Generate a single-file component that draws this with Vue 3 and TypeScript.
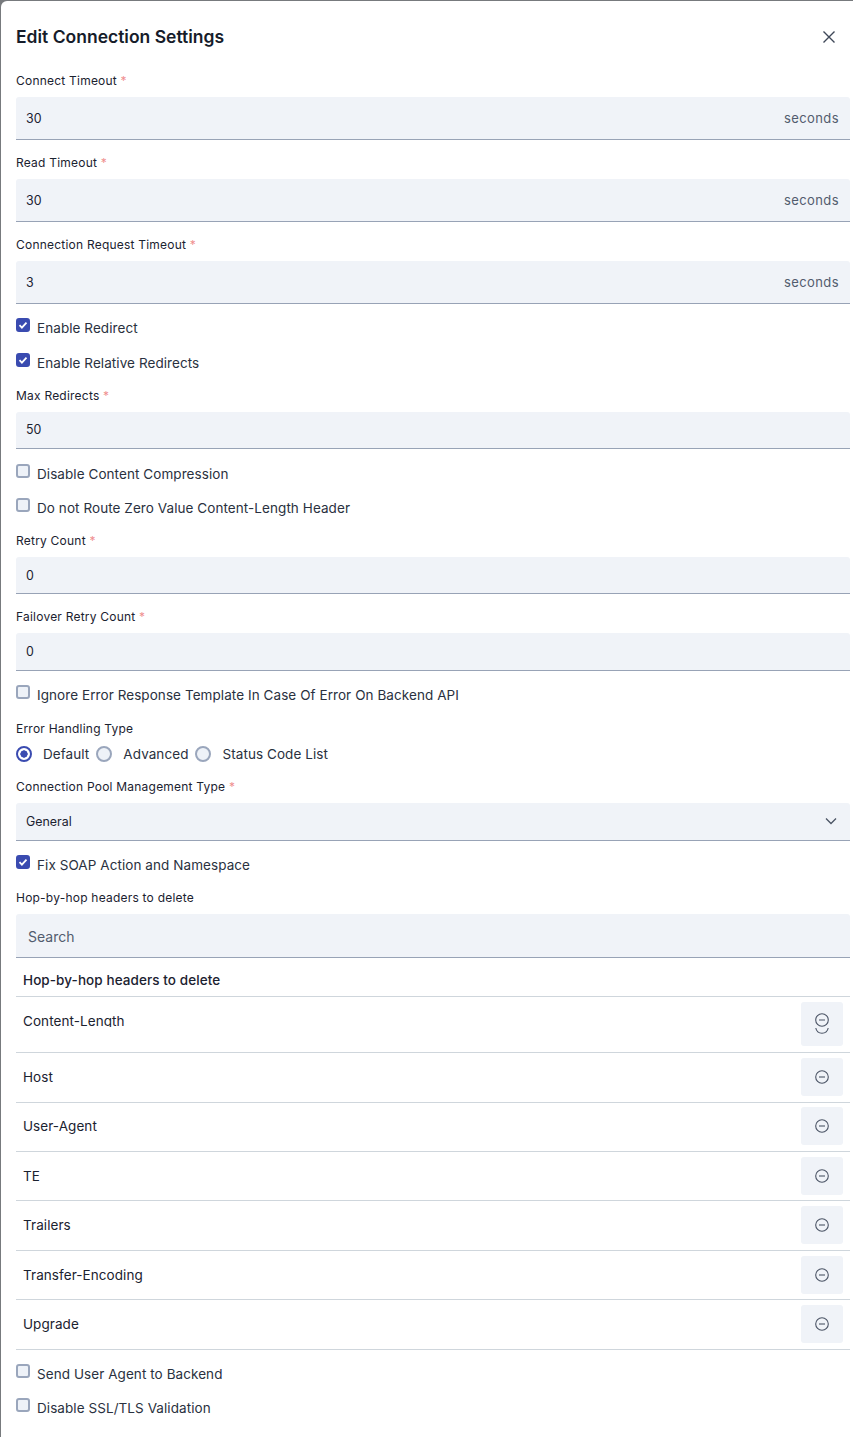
<script setup lang="ts">
import { reactive, ref } from 'vue';

const timeouts = reactive([
  { label: 'Connect Timeout', value: '30' },
  { label: 'Read Timeout', value: '30' },
  { label: 'Connection Request Timeout', value: '3' },
]);

const errorType = ref('Default');
const errorTypes = ['Default', 'Advanced', 'Status Code List'];

const headers = ref(['Content-Length', 'Host', 'User-Agent', 'TE', 'Trailers', 'Transfer-Encoding', 'Upgrade']);
</script>

<template>
  <div class="modal">
    <header class="modal-head">
      <h2>Edit Connection Settings</h2>
      <button class="close" aria-label="Close">
        <svg width="14" height="14" viewBox="0 0 14 14"><path d="M1.5 1.5l11 11M12.5 1.5l-11 11" /></svg>
      </button>
    </header>

    <form class="form" @submit.prevent>
      <div v-for="t in timeouts" :key="t.label" class="field">
        <label class="label">{{ t.label }} <em>*</em></label>
        <div class="input tall">
          <input v-model="t.value" />
          <span class="unit">seconds</span>
        </div>
      </div>

      <label class="check on first"><span class="box"><svg width="10" height="10" viewBox="0 0 10 10"><path d="M1.5 5.2l2.4 2.4 4.6-5" /></svg></span>Enable Redirect</label>
      <label class="check on"><span class="box"><svg width="10" height="10" viewBox="0 0 10 10"><path d="M1.5 5.2l2.4 2.4 4.6-5" /></svg></span>Enable Relative Redirects</label>

      <div class="field">
        <label class="label">Max Redirects <em>*</em></label>
        <div class="input"><input value="50" /></div>
      </div>

      <label class="check nudge-down"><span class="box"></span>Disable Content Compression</label>
      <label class="check nudge-up"><span class="box"></span>Do not Route Zero Value Content-Length Header</label>

      <div class="field">
        <label class="label">Retry Count <em>*</em></label>
        <div class="input low"><input value="0" /></div>
      </div>
      <div class="field">
        <label class="label">Failover Retry Count <em>*</em></label>
        <div class="input"><input value="0" /></div>
      </div>

      <label class="check"><span class="box"></span>Ignore Error Response Template In Case Of Error On Backend API</label>

      <div class="field error-type">
        <label class="label">Error Handling Type</label>
        <div class="radios">
          <label v-for="r in errorTypes" :key="r" class="radio" :class="{ on: errorType === r }" @click="errorType = r">
            <span class="dot"></span>{{ r }}
          </label>
        </div>
      </div>

      <div class="field">
        <label class="label">Connection Pool Management Type <em>*</em></label>
        <div class="input select">
          <span>General</span>
          <svg width="12" height="8" viewBox="0 0 12 8"><path d="M1 1.5l5 5 5-5" /></svg>
        </div>
      </div>

      <label class="check on"><span class="box"><svg width="10" height="10" viewBox="0 0 10 10"><path d="M1.5 5.2l2.4 2.4 4.6-5" /></svg></span>Fix SOAP Action and Namespace</label>

      <div class="field">
        <label class="label">Hop-by-hop headers to delete</label>
        <div class="input search"><input placeholder="Search" /></div>
        <div class="table">
          <div class="table-head">Hop-by-hop headers to delete</div>
          <div v-for="(h, i) in headers" :key="h" class="row" :class="{ cut: i === 0 }">
            <span class="name">{{ h }}</span>
            <button class="remove" :aria-label="'Remove ' + h">
              <svg v-if="i === 0" width="16" height="22" viewBox="0 0 16 22">
                <circle cx="8" cy="7" r="6.3" />
                <path d="M5 7h6M1.8 15a6.3 6.3 0 0 0 12.4 0" />
              </svg>
              <svg v-else width="16" height="16" viewBox="0 0 16 16">
                <circle cx="8" cy="8" r="6.3" />
                <path d="M5 8h6" />
              </svg>
            </button>
          </div>
        </div>
      </div>

      <label class="check"><span class="box"></span>Send User Agent to Backend</label>
      <label class="check"><span class="box"></span>Disable SSL/TLS Validation</label>
    </form>
  </div>
</template>

<style>
html,
body {
  margin: 0;
  height: 100%;
  overflow: hidden;
  background: #777a7d;
}
</style>

<style scoped>
.modal {
  box-sizing: border-box;
  margin: 1px 0 0 1px;
  height: 1436px;
  padding: 0 3px 0 15px;
  background: #fff;
  border-radius: 6px 0 0 0;
  font-family: Inter, "Liberation Sans", sans-serif;
  color: #1b2230;
  overflow: hidden;
}

.modal-head {
  display: flex;
  align-items: center;
  justify-content: space-between;
  height: 71px;
  padding-right: 14px;
}

.modal-head h2 {
  margin: 0;
  font-size: 17.5px;
  font-weight: 600;
  color: #161c2a;
}

.close {
  display: flex;
  padding: 0;
  border: 0;
  background: none;
}

.close path {
  fill: none;
  stroke: #3f4858;
  stroke-width: 1.4;
}

.form {
  display: flex;
  flex-direction: column;
  gap: 14.3px;
}

.label {
  display: block;
  height: 16px;
  margin-bottom: 8.7px;
  font-size: 12px;
  font-weight: 400;
  line-height: 18px;
  letter-spacing: 0.22px;
}

.label em {
  font-style: normal;
  color: #ef8f8f;
}

.input {
  box-sizing: border-box;
  display: flex;
  align-items: center;
  height: 37.5px;
  padding: 0 11px 0 10px;
  background: #f0f3f8;
  border-bottom: 1px solid #98a3b6;
  border-radius: 3px 3px 0 0;
  font-size: 12.4px;
}

.input.tall {
  height: 43px;
  padding-top: 2px;
}

.input.low {
  padding-top: 2px;
}

.input input {
  flex: 1;
  min-width: 0;
  padding: 0;
  border: 0;
  outline: 0;
  background: none;
  font: inherit;
  color: #1b2230;
}

.unit {
  font-size: 13px;
  letter-spacing: 0.4px;
  color: #525c6e;
}

.tall .unit {
  margin-top: -2px;
}

.select {
  justify-content: space-between;
  padding-right: 13px;
}

.select path {
  fill: none;
  stroke: #4b5465;
  stroke-width: 1.3;
}

.search {
  height: 44px;
  padding-top: 2px;
  padding-left: 12px;
  font-size: 14px;
  letter-spacing: 0.2px;
}

.search input::placeholder {
  color: #525c6e;
  opacity: 1;
}

.check {
  display: flex;
  align-items: flex-start;
  height: 20px;
  font-size: 13.5px;
  line-height: 20px;
  letter-spacing: 0.07px;
  color: #2a3140;
}

.check.first {
  margin-top: 0.3px;
}

.check.nudge-down {
  margin-top: 0.5px;
}

.check.nudge-up {
  margin-bottom: -0.5px;
}

.box {
  box-sizing: border-box;
  display: flex;
  align-items: center;
  justify-content: center;
  width: 14px;
  height: 14px;
  margin-right: 7px;
  background: #eef2f8;
  border: 2px solid #9aa6bc;
  border-radius: 3px;
}

.check.on .box {
  background: #3a4bb0;
  border-color: #3a4bb0;
}

.box path {
  fill: none;
  stroke: #fff;
  stroke-width: 1.8;
}

.error-type {
  margin: 1px 0 1.2px;
}

.radios {
  display: flex;
  align-items: center;
  height: 17px;
  padding-top: 1px;
}

.radio {
  display: flex;
  align-items: center;
  margin-right: 7px;
  font-size: 13.5px;
  letter-spacing: 0.07px;
  color: #2a3140;
}

.dot {
  box-sizing: border-box;
  width: 16px;
  height: 16px;
  margin-right: 11px;
  background: #eef2f8;
  border: 2px solid #9aa6bc;
  border-radius: 50%;
}

.radio.on .dot {
  background: radial-gradient(circle, #3a4bb0 0 3.4px, #fff 3.9px);
  border-color: #3a4bb0;
}

.table-head {
  height: 39.3px;
  box-sizing: border-box;
  padding: 0 7px;
  font-size: 13.5px;
  font-weight: 500;
  line-height: 44px;
  letter-spacing: 0.08px;
  border-bottom: 1px solid #cfd6dc;
}

.row {
  box-sizing: border-box;
  display: flex;
  align-items: center;
  justify-content: space-between;
  height: 49.4px;
  padding: 0 7px 0.6px;
  font-size: 13.5px;
  letter-spacing: 0.07px;
  border-bottom: 1px solid #cfd6dc;
}

.row:last-child {
  height: 49.7px;
}

.row.cut {
  height: 56px;
  padding-bottom: 0;
}

.row.cut .name {
  height: 15px;
  margin-bottom: 11px;
  overflow: hidden;
  line-height: 19px;
}

.remove {
  display: flex;
  align-items: center;
  justify-content: center;
  width: 42px;
  height: 38px;
  padding: 0;
  border: 0;
  border-radius: 3px;
  background: #f0f3f8;
}

.row.cut .remove {
  height: 44px;
  margin-bottom: 1px;
}

.remove circle,
.remove path {
  fill: none;
  stroke: #4b5465;
  stroke-width: 1.1;
}
</style>
